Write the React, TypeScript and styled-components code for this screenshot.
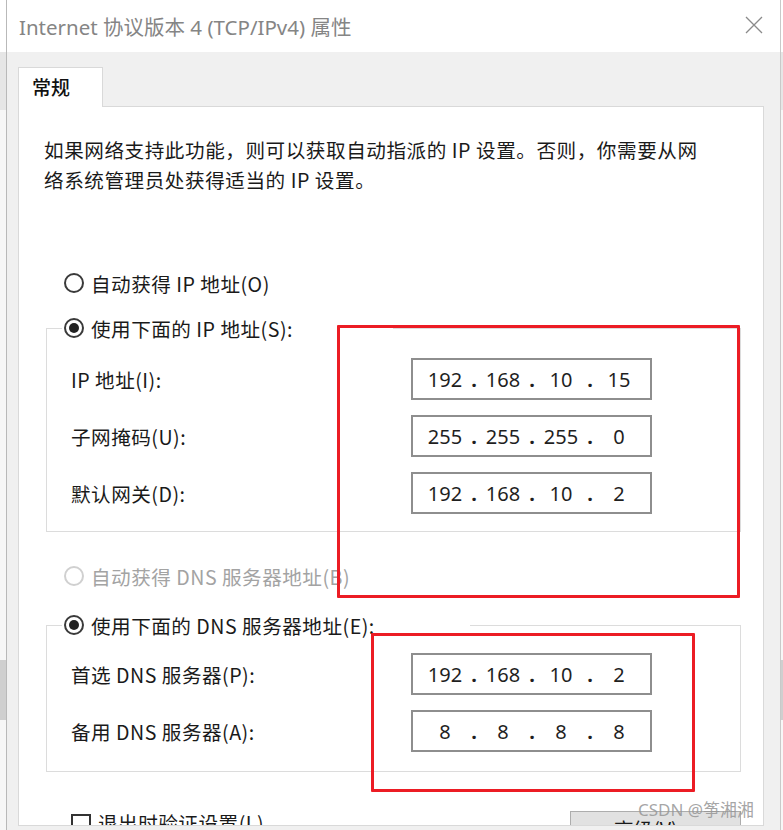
import * as React from "react";
import styled, { createGlobalStyle } from "styled-components";

const GlobalStyle = createGlobalStyle`
  html, body {
    margin: 0;
    padding: 0;
    background: #ffffff;
  }
  body {
    font-family: "Noto Sans", "Noto Sans CJK SC", sans-serif;
    color: #1a1a1a;
  }
`;

const Screen = styled.div`
  width: 783px;
  height: 830px;
  display: flex;
  overflow: hidden;
  position: relative;
  background: #f3f3f3;
`;

const BackStrip = styled.div<{ $w: number }>`
  width: ${(p) => p.$w}px;
  flex-shrink: 0;
  background: linear-gradient(
    #ffffff 0 52px,
    #e6e6e6 52px 110px,
    #f7f7f7 110px 660px,
    #cfcfcf 660px 720px,
    #f7f7f7 720px
  );
`;

const Dialog = styled.div`
  flex: 1;
  display: flex;
  flex-direction: column;
  border-left: 1px solid #b9b9b9;
  border-right: 1px solid #c9c9c9;
  background: #f0f0f0;
`;

const TitleBar = styled.div`
  height: 52px;
  flex-shrink: 0;
  background: #ffffff;
  display: flex;
  align-items: center;
  justify-content: space-between;
  padding: 0 17px 0 12px;
`;

const Title = styled.div`
  font-family: "Noto Sans", "Noto Sans CJK SC", sans-serif;
  font-size: 20.5px;
  color: #858585;
`;

const CloseIcon = styled.svg`
  width: 18px;
  height: 18px;
  margin-bottom: 2px;
`;

const Body = styled.div`
  flex: 1;
  padding: 15px 16px 0 11px;
  display: flex;
  flex-direction: column;
  min-height: 0;
`;

const Tabs = styled.div`
  display: flex;
`;

const Tab = styled.div`
  width: 85px;
  height: 40px;
  box-sizing: border-box;
  background: #ffffff;
  border: 1px solid #d9d9d9;
  border-bottom: none;
  margin-bottom: -1px;
  position: relative;
  z-index: 1;
  padding: 5px 0 0 13px;
  font-family: "Noto Sans CJK SC", sans-serif;
  font-size: 19px;
  font-weight: 500;
  color: #111;
`;

const Panel = styled.div`
  height: 720px;
  box-sizing: border-box;
  background: #ffffff;
  border: 1px solid #d9d9d9;
  padding: 28px 22px 0 25px;
  display: flex;
  flex-direction: column;
  overflow: hidden;
`;

const Text = styled.div`
  font-family: "Noto Sans CJK SC", sans-serif;
  font-size: 19.6px;
  line-height: 30px;
  letter-spacing: 0.55px;
  color: #1a1a1a;
`;

const RadioRow = styled.label<{ $top: number; $disabled?: boolean }>`
  display: flex;
  align-items: center;
  gap: 7px;
  height: 24px;
  margin: ${(p) => p.$top}px 0 0 20px;
  font-family: "Noto Sans CJK SC", sans-serif;
  font-size: 19.6px;
  letter-spacing: 0.5px;
  color: ${(p) => (p.$disabled ? "#a3a3a3" : "#1a1a1a")};
`;

const RadioDot = styled.span<{ $checked?: boolean; $disabled?: boolean }>`
  width: 20px;
  height: 20px;
  box-sizing: border-box;
  border-radius: 50%;
  border: 2px solid ${(p) => (p.$disabled ? "#d0d0d0" : "#3a3a3a")};
  display: flex;
  align-items: center;
  justify-content: center;
  flex-shrink: 0;
  &::after {
    content: "";
    width: 10px;
    height: 10px;
    border-radius: 50%;
    background: #222;
    display: ${(p) => (p.$checked ? "block" : "none")};
  }
`;

const Group = styled.fieldset<{ $top: number }>`
  margin: ${(p) => p.$top}px 0 0 2px;
  padding: 0;
  min-width: 0;
  border: 1px solid #dcdcdc;
`;

const Legend = styled.legend<{ $gap: number }>`
  margin-left: 15px;
  padding: 0 ${(p) => p.$gap}px 0 2px;
`;

const LegendRow = styled.span`
  display: flex;
  align-items: center;
  gap: 7px;
  height: 24px;
  font-family: "Noto Sans CJK SC", sans-serif;
  font-size: 19.6px;
  letter-spacing: 0.5px;
  color: #1a1a1a;
`;

const Fields = styled.div<{ $pt: number; $pb: number }>`
  display: grid;
  grid-template-columns: 1fr 241px;
  row-gap: 15px;
  align-items: center;
  padding: ${(p) => p.$pt}px 88px ${(p) => p.$pb}px 24px;
`;

const FieldLabel = styled.span`
  font-family: "Noto Sans CJK SC", sans-serif;
  font-size: 19.6px;
  letter-spacing: 0.5px;
  color: #1a1a1a;
`;

const IpBox = styled.div`
  height: 42px;
  box-sizing: border-box;
  border: 2px solid #8e8e8e;
  background: #fff;
  padding-left: 7px;
  display: flex;
  align-items: center;
  font-family: "Noto Sans", sans-serif;
  font-size: 20px;
  color: #1f1f1f;
`;

const Octet = styled.span`
  width: 50px;
  text-align: center;
`;

const Dot = styled.span`
  width: 8px;
  text-align: center;
  font-weight: 700;
`;

const Bottom = styled.div`
  display: flex;
  align-items: flex-start;
  margin-top: 41px;
  padding-left: 27px;
`;

const CheckItem = styled.div`
  display: flex;
  align-items: flex-start;
  gap: 7px;
  flex: 1;
  font-family: "Noto Sans CJK SC", sans-serif;
  font-size: 19.6px;
  line-height: 20px;
  letter-spacing: 0.5px;
  color: #1a1a1a;
`;

const CheckBox = styled.span`
  width: 20px;
  height: 20px;
  box-sizing: border-box;
  border: 2px solid #333;
  margin-top: 1px;
  flex-shrink: 0;
`;

const OkButton = styled.div`
  width: 171px;
  height: 36px;
  box-sizing: border-box;
  margin-top: -2px;
  background: #e1e1e1;
  border: 1px solid #adadad;
  padding: 2px 0 0 43px;
  font-family: "Noto Sans CJK SC", sans-serif;
  font-size: 19.6px;
  color: #1a1a1a;
`;

const RedFrame = styled.div<{ $x: number; $y: number; $w: number; $h: number }>`
  position: absolute;
  left: ${(p) => p.$x}px;
  top: ${(p) => p.$y}px;
  width: ${(p) => p.$w}px;
  height: ${(p) => p.$h}px;
  box-sizing: border-box;
  border: 3px solid #ec1c24;
  border-radius: 1px;
  pointer-events: none;
`;

const Watermark = styled.div`
  position: absolute;
  left: 638px;
  top: 796px;
  font-family: "Noto Sans", "Noto Sans CJK SC", sans-serif;
  font-size: 17px;
  color: rgba(150, 150, 150, 0.85);
  pointer-events: none;
`;

const IpAddress = ({ value }: { value: string }) => {
  const parts = value.split(".");
  return (
    <IpBox>
      {parts.map((p, i) => (
        <React.Fragment key={i}>
          {i > 0 && <Dot>.</Dot>}
          <Octet>{p}</Octet>
        </React.Fragment>
      ))}
    </IpBox>
  );
};

const ipRows = [
  { label: "IP 地址(I):", value: "192.168.10.15" },
  { label: "子网掩码(U):", value: "255.255.255.0" },
  { label: "默认网关(D):", value: "192.168.10.2" },
];

const dnsRows = [
  { label: "首选 DNS 服务器(P):", value: "192.168.10.2" },
  { label: "备用 DNS 服务器(A):", value: "8.8.8.8" },
];

const App = () => {
  return (
    <Screen>
      <GlobalStyle />
      <BackStrip $w={6} />
      <Dialog>
        <TitleBar>
          <Title>Internet 协议版本 4 (TCP/IPv4) 属性</Title>
          <CloseIcon viewBox="0 0 18 18">
            <path d="M1 1 L17 17 M17 1 L1 17" stroke="#8a8a8a" strokeWidth="1.3" fill="none" />
          </CloseIcon>
        </TitleBar>
        <Body>
          <Tabs>
            <Tab>常规</Tab>
          </Tabs>
          <Panel>
            <Text>
              如果网络支持此功能，则可以获取自动指派的 IP 设置。否则，你需要从网
              <br />
              络系统管理员处获得适当的 IP 设置。
            </Text>
            <RadioRow $top={76}>
              <RadioDot />
              自动获得 IP 地址(O)
            </RadioRow>
            <Group $top={21}>
              <Legend $gap={100}>
                <LegendRow>
                  <RadioDot $checked />
                  使用下面的 IP 地址(S):
                </LegendRow>
              </Legend>
              <Fields $pt={18} $pb={17}>
                {ipRows.map((r) => (
                  <React.Fragment key={r.label}>
                    <FieldLabel>{r.label}</FieldLabel>
                    <IpAddress value={r.value} />
                  </React.Fragment>
                ))}
              </Fields>
            </Group>
            <RadioRow $top={32} $disabled>
              <RadioDot $disabled />
              自动获得 DNS 服务器地址(B)
            </RadioRow>
            <Group $top={25}>
              <Legend $gap={95}>
                <LegendRow>
                  <RadioDot $checked />
                  使用下面的 DNS 服务器地址(E):
                </LegendRow>
              </Legend>
              <Fields $pt={16} $pb={19}>
                {dnsRows.map((r) => (
                  <React.Fragment key={r.label}>
                    <FieldLabel>{r.label}</FieldLabel>
                    <IpAddress value={r.value} />
                  </React.Fragment>
                ))}
              </Fields>
            </Group>
            <Bottom>
              <CheckItem>
                <CheckBox />
                退出时验证设置(L)
              </CheckItem>
              <OkButton>高级(V)...</OkButton>
            </Bottom>
          </Panel>
        </Body>
      </Dialog>
      <BackStrip $w={2} />
      <RedFrame $x={337} $y={325} $w={403} $h={273} />
      <RedFrame $x={371} $y={633} $w={324} $h={159} />
      <Watermark>CSDN @筝湘湘</Watermark>
    </Screen>
  );
};

export default App;
